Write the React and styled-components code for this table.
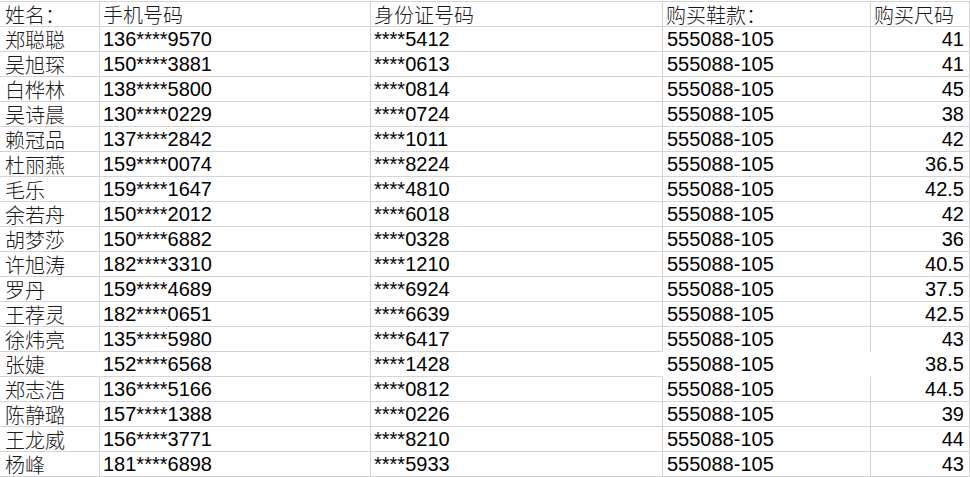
import React from 'react';
import styled, { createGlobalStyle } from 'styled-components';

const GlobalStyle = createGlobalStyle`
  html, body {
    margin: 0;
    padding: 0;
    background: #ffffff;
  }
  body {
    font-family: "Liberation Sans", "Noto Sans CJK SC", sans-serif;
    color: #000000;
  }
`;

const gridColor = '#d4d4d4';

const Sheet = styled.div`
  display: flex;
  flex-direction: column;
  width: 970px;
  margin-top: 1px;
  border-top: 1px solid ${gridColor};
`;

const Row = styled.div`
  display: grid;
  grid-template-columns: 100px 271px 292px 208px 99px;
  height: 25px;
`;

const Cell = styled.div`
  box-sizing: border-box;
  height: 25px;
  padding: 1px ${(p) => (p.$right ? '5px' : '0')} 0 ${(p) => p.$pad || 3}px;
  border-right: 1px solid ${(p) => (p.$noRight ? 'transparent' : gridColor)};
  border-bottom: 1px solid ${(p) => (p.$noBottom ? 'transparent' : gridColor)};
  font-size: 20px;
  line-height: 23px;
  white-space: nowrap;
  text-align: ${(p) => (p.$right ? 'right' : 'left')};
`;

const CjkText = styled.span`
  font-family: "Noto Sans CJK SC", sans-serif;
  font-weight: 300;
  font-size: 20px;
  line-height: 23px;
  color: #1a1a1a;
`;

const header = ['姓名：', '手机号码', '身份证号码', '购买鞋款：', '购买尺码'];

const rows = [
  ['郑聪聪', '136****9570', '****5412', '41'],
  ['吴旭琛', '150****3881', '****0613', '41'],
  ['白桦林', '138****5800', '****0814', '45'],
  ['吴诗晨', '130****0229', '****0724', '38'],
  ['赖冠品', '137****2842', '****1011', '42'],
  ['杜丽燕', '159****0074', '****8224', '36.5'],
  ['毛乐', '159****1647', '****4810', '42.5'],
  ['余若舟', '150****2012', '****6018', '42'],
  ['胡梦莎', '150****6882', '****0328', '36'],
  ['许旭涛', '182****3310', '****1210', '40.5'],
  ['罗丹', '159****4689', '****6924', '37.5'],
  ['王荐灵', '182****0651', '****6639', '42.5'],
  ['徐炜亮', '135****5980', '****6417', '43'],
  ['张婕', '152****6568', '****1428', '38.5', 'pasted'],
  ['郑志浩', '136****5166', '****0812', '44.5'],
  ['陈静璐', '157****1388', '****0226', '39'],
  ['王龙威', '156****3771', '****8210', '44'],
  ['杨峰', '181****6898', '****5933', '43']
];

const App = () => {
  return (
    <>
      <GlobalStyle />
      <Sheet>
        <Row>
          {header.map((label, i) => (
            <Cell key={label} $pad={i === 0 ? 5 : 3}>
              <CjkText>{label}</CjkText>
            </Cell>
          ))}
        </Row>
        {rows.map(([name, phone, id, size, flag], i) => {
          const pasted = flag === 'pasted';
          const beforePasted = rows[i + 1] && rows[i + 1][4] === 'pasted';
          const openBottom = pasted || beforePasted;
          return (
            <Row key={name}>
              <Cell $pad={5} $noRight={pasted}>
                <CjkText>{name}</CjkText>
              </Cell>
              <Cell>{phone}</Cell>
              <Cell $noRight={pasted}>{id}</Cell>
              <Cell $pad={4} $noRight={pasted} $noBottom={openBottom}>
                555088-105
              </Cell>
              <Cell $right $noBottom={openBottom}>
                {size}
              </Cell>
            </Row>
          );
        })}
      </Sheet>
    </>
  );
};

export default App;
